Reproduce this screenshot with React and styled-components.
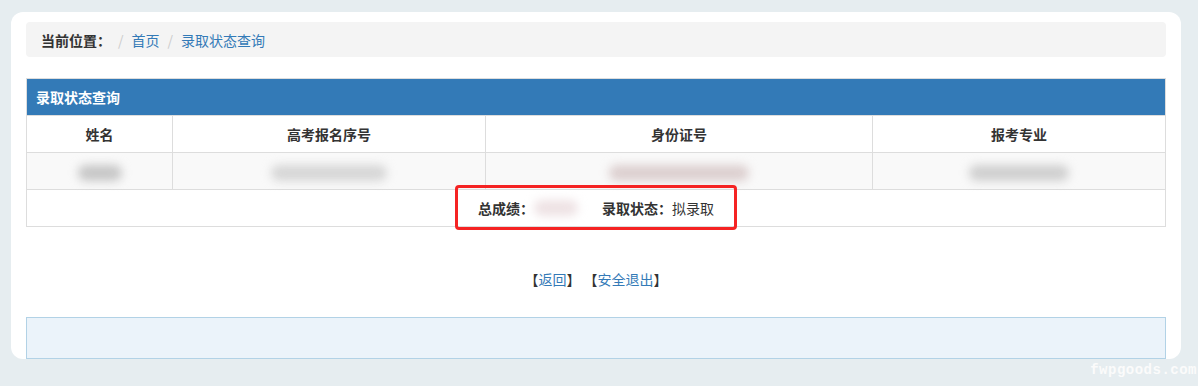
import styled, { createGlobalStyle } from 'styled-components';

const GlobalStyle = createGlobalStyle`
  html, body {
    margin: 0;
    padding: 0;
    background: #e6edf0;
    font-family: "Noto Sans CJK SC", "Microsoft YaHei", sans-serif;
    font-size: 14px;
    color: #333;
  }
`;

const Page = styled.div`
  position: relative;
  width: 1198px;
  height: 386px;
  padding: 12px 17px 0 11px;
  box-sizing: border-box;
  overflow: hidden;
`;

const Card = styled.div`
  position: relative;
  background: #fff;
  border-radius: 12px;
  height: 347px;
  padding: 10px 15px 0;
  box-sizing: border-box;
  overflow: hidden;
`;

const Breadcrumb = styled.div`
  display: flex;
  align-items: center;
  height: 35px;
  padding: 0 15px;
  background: #f4f4f4;
  border-radius: 4px;
  line-height: 20px;
`;

const CrumbLabel = styled.b`
  font-weight: bold;
  color: #333;
  margin-right: -1px;
`;

const Sep = styled.span`
  color: #ccc;
  padding: 0 8px;
`;

const Link = styled.a`
  color: #337ab7;
  text-decoration: none;
`;

const Table = styled.table`
  width: 100%;
  margin-top: 21px;
  border-collapse: collapse;
  table-layout: fixed;
  border: 1px solid #ddd;
`;

const Caption = styled.th`
  background: #337ab7;
  color: #fff;
  text-align: left;
  font-weight: bold;
  height: 36px;
  padding: 0 9px;
  border: 1px solid #ddd;
`;

const Head = styled.th`
  height: 36px;
  padding: 0;
  border: 1px solid #ddd;
  font-weight: bold;
  text-align: center;
`;

const Row = styled.tr`
  background: ${p => (p.$striped ? '#f9f9f9' : '#fff')};
`;

const Cell = styled.td`
  height: 36px;
  border: 1px solid #ddd;
  text-align: center;
  padding: 0;
`;

const Blur = styled.span`
  display: inline-block;
  vertical-align: middle;
  width: ${p => p.$w}px;
  height: 16px;
  border-radius: 8px;
  background: ${p => p.$c || '#d4d4d4'};
  filter: blur(5px);
`;

const Label = styled.b`
  font-weight: bold;
`;

const Summary = styled.div`
  display: inline-flex;
  align-items: center;
  line-height: 20px;
`;

const Gap = styled.span`
  display: inline-block;
  width: ${p => p.$w}px;
`;

const Mark = styled.div`
  position: absolute;
  left: 444px;
  top: 173px;
  width: 282px;
  height: 45px;
  box-sizing: border-box;
  border: 3px solid #f52323;
  border-radius: 4px;
`;

const Actions = styled.div`
  margin-top: 42px;
  text-align: center;
  line-height: 20px;
`;

const Notice = styled.div`
  margin-top: 28px;
  height: 42px;
  background: #ebf3fa;
  border: 1px solid #b2d2e6;
  box-sizing: border-box;
`;

const Watermark = styled.div`
  position: absolute;
  right: 1px;
  bottom: 8px;
  font-family: "Liberation Mono", "DejaVu Sans Mono", monospace;
  font-size: 14px;
  font-weight: bold;
  letter-spacing: 0.5px;
  color: #fbfbfb;
`;

export default function App() {
  return (
    <>
      <GlobalStyle />
      <Page>
        <Card>
          <Breadcrumb>
            <CrumbLabel>当前位置：</CrumbLabel>
            <Sep>/</Sep>
            <Link href="#">首页</Link>
            <Sep>/</Sep>
            <Link href="#">录取状态查询</Link>
          </Breadcrumb>

          <Table>
            <colgroup>
              <col style={{ width: 146 }} />
              <col style={{ width: 313 }} />
              <col style={{ width: 387 }} />
              <col />
            </colgroup>
            <thead>
              <tr>
                <Caption colSpan={4}>录取状态查询</Caption>
              </tr>
            </thead>
            <tbody>
              <Row>
                <Head>姓名</Head>
                <Head>高考报名序号</Head>
                <Head>身份证号</Head>
                <Head>报考专业</Head>
              </Row>
              <Row $striped>
                <Cell><Blur $w={44} $c="#c6c6c6" /></Cell>
                <Cell><Blur $w={116} $c="#d6d6d6" /></Cell>
                <Cell><Blur $w={140} $c="#dccfcf" /></Cell>
                <Cell><Blur $w={100} $c="#cfcfcf" /></Cell>
              </Row>
              <Row>
                <Cell colSpan={4}>
                  <Summary>
                    <Label>总成绩：</Label>
                    <Blur $w={44} $c="#eee2e4" />
                    <Gap $w={24} />
                    <Label>录取状态：</Label>拟录取
                  </Summary>
                </Cell>
              </Row>
            </tbody>
          </Table>

          <Actions>
            【<Link href="#">返回</Link>】 【<Link href="#">安全退出</Link>】
          </Actions>

          <Notice />
          <Mark />
        </Card>
        <Watermark>fwpgoods.com</Watermark>
      </Page>
    </>
  );
}
